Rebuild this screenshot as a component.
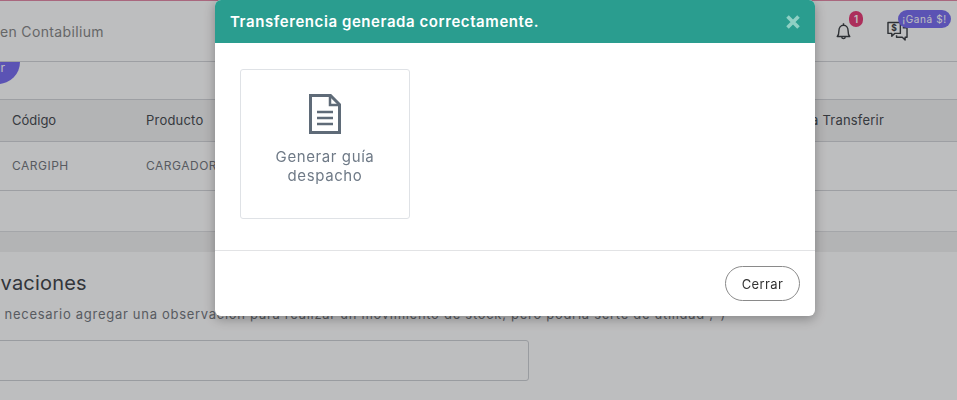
<script>
  const columns = ['Código', 'Producto', 'Cantidad a Transferir'];
</script>

<div class="page">
  <header class="topbar">
    <span class="welcome">Bienvenido en Contabilium</span>
    <div class="top-icons">
      <div class="icon-wrap bell">
        <svg width="15" height="19" viewBox="0 0 18 22" fill="none" stroke="#3f4246" stroke-width="1.7">
          <path d="M1.5 17c1.5-1.500 2-3.500 2-7 0-3.500 2-6.500 5.500-6.500s5.500 3 5.500 6.500c0 3.500.5 5.500 2 7z" stroke-linejoin="round"/>
          <path d="M9 1v2.500M7 17.500a2 2 0 0 0 4 0"/>
        </svg>
        <span class="count">1</span>
      </div>
      <div class="icon-wrap chat">
        <svg width="21" height="20" viewBox="0 0 22 21" fill="none" stroke="#3f4246" stroke-width="1.500">
          <path d="M1 1.500h13v11.500H8l-3 3v-3H1z" stroke-linejoin="round"/>
          <path d="M16.500 7H21v10h-2v3l-3-3h-6v-2" stroke-linejoin="round"/>
          <text x="7.500" y="10.500" text-anchor="middle" class="dollar">$</text>
        </svg>
        <span class="promo">¡Ganá $!</span>
      </div>
    </div>
  </header>

  <div class="toolbar">
    <span class="pill">Transferir</span>
  </div>

  <div class="table">
    <div class="row head">
      <span class="code">{columns[0]}</span>
      <span class="product">{columns[1]}</span>
      <span class="qty">{columns[2]}</span>
    </div>
    <div class="row body">
      <span class="code">CARGIPH</span>
      <span class="product">CARGADOR IPHONE</span>
    </div>
  </div>

  <div class="band"></div>

  <section class="notes">
    <h2>Observaciones</h2>
    <p>No es necesario agregar una observación para realizar un movimiento de stock, pero podría serte de utilidad ;-)</p>
    <div class="input"></div>
  </section>
</div>

<div class="backdrop"></div>

<div class="modal">
  <div class="modal-head">
    <h3>Transferencia generada correctamente.</h3>
    <svg class="close" width="14" height="14" viewBox="0 0 14 14" stroke="#8fd0c4" stroke-width="3.600">
      <path d="M1.500 1.500l11 11M12.500 1.500l-11 11"/>
    </svg>
  </div>
  <div class="modal-body">
    <div class="action">
      <svg width="32" height="40" viewBox="0 0 32 40" fill="none" stroke="#5f6b78" stroke-width="3">
        <path d="M1.500 1.500h20l9 9v28h-29z"/>
        <path d="M21 2v9h9" stroke-width="2.500"/>
        <path d="M8 18h16M8 24h16M8 30h16" stroke-width="2.500"/>
      </svg>
      <span>Generar guía despacho</span>
    </div>
  </div>
  <div class="modal-foot">
    <button>Cerrar</button>
  </div>
</div>

<style>
  :global(body) {
    background: #fff;
    overflow: hidden;
    font-family: "Inter", "Open Sans", sans-serif;
  }

  .page {
    height: 400px;
    overflow: hidden;
    color: #3a3d42;
  }

  .topbar {
    height: 62px;
    box-sizing: border-box;
    border-top: 1px solid #e58aa8;
    border-bottom: 1px solid #d4d6da;
    display: flex;
    align-items: center;
    justify-content: space-between;
    margin-left: -81px;
    padding-right: 18px;
  }

  .welcome {
    font-size: 14px;
    color: #8a8a8a;
    letter-spacing: 0.35px;
  }

  .top-icons {
    display: flex;
    gap: 36px;
    align-items: center;
  }

  .icon-wrap {
    position: relative;
    display: flex;
    height: 20px;
  }

  .bell {
    width: 15px;
    align-items: flex-end;
  }

  .count {
    position: absolute;
    left: 13px;
    top: -10px;
    width: 14px;
    height: 16px;
    border-radius: 7px;
    background: #e83e79;
    color: #fff;
    font-size: 10px;
    font-weight: 600;
    text-align: center;
    line-height: 16px;
  }

  .chat {
    width: 52px;
  }

  .dollar {
    font-size: 9px;
    font-weight: 700;
    fill: #3f4246;
    stroke: none;
  }

  .promo {
    position: absolute;
    left: 11px;
    top: -11px;
    width: 53px;
    height: 18px;
    border-radius: 9px;
    background: #7b6ff0;
    color: #fff;
    font-size: 10px;
    letter-spacing: 0.6px;
    line-height: 18px;
    text-align: center;
    white-space: nowrap;
  }

  .toolbar {
    height: 37px;
    box-sizing: border-box;
    margin-left: -80px;
  }

  .pill {
    display: block;
    width: 100px;
    height: 22px;
    box-sizing: border-box;
    padding-right: 15px;
    text-align: right;
    border-radius: 0 0 22px 22px;
    background: #7b6ff0;
    color: #fff;
    font-size: 12px;
    line-height: 12px;
  }

  .row {
    display: flex;
    align-items: center;
    box-sizing: border-box;
    padding-left: 12px;
    font-size: 13px;
    border-bottom: 1px solid #d4d6da;
  }

  .head {
    height: 43px;
    padding-bottom: 2px;
    background: #f2f2f2;
    border-top: 1px solid #d4d6da;
    color: #4a4d52;
  }

  .body {
    height: 49px;
    padding-bottom: 2px;
    font-size: 12px;
    color: #777a7f;
    letter-spacing: 0.5px;
  }

  .code {
    width: 134px;
  }

  .product {
    width: 400px;
    white-space: nowrap;
  }

  .head .product {
    letter-spacing: 0.2px;
  }

  .qty {
    margin-left: auto;
    padding-right: 73px;
    letter-spacing: 0.2px;
  }

  .band {
    height: 20px;
    margin-top: 40px;
    background: #f2f2f2;
    border-top: 1px solid #dedfe2;
  }

  .notes {
    margin-left: -58px;
    padding-top: 19px;
  }

  h2 {
    margin: 0;
    font-size: 20px;
    font-weight: 400;
    line-height: 24px;
    letter-spacing: 0.2px;
    color: #45484d;
  }

  .notes p {
    margin: 10px 0 0 19px;
    font-size: 13px;
    line-height: 18px;
    letter-spacing: 0.71px;
    color: #777a7f;
    white-space: nowrap;
  }

  .input {
    width: 587px;
    height: 41px;
    margin-top: 17px;
    box-sizing: border-box;
    border: 1px solid #cfd1d5;
    border-radius: 3px;
  }

  .backdrop {
    position: fixed;
    inset: 0;
    background: rgba(0, 2, 8, 0.26);
  }

  .modal {
    position: fixed;
    left: 215px;
    top: 0;
    width: 600px;
    height: 316px;
    display: flex;
    flex-direction: column;
    background: #fff;
    border-radius: 6px;
    box-shadow: 0 3px 12px rgba(0, 0, 0, 0.3);
    overflow: hidden;
  }

  .modal-head {
    height: 43px;
    flex: none;
    display: flex;
    align-items: center;
    justify-content: space-between;
    padding: 0 15px;
    background: #2a9d8f;
  }

  h3 {
    margin: 0;
    font-size: 15px;
    font-weight: 600;
    letter-spacing: 0.57px;
    color: #fff;
  }

  .modal-body {
    height: 207px;
    flex: none;
    box-sizing: border-box;
    padding: 26px 25px 0;
  }

  .action {
    width: 170px;
    height: 150px;
    box-sizing: border-box;
    padding-top: 24px;
    border: 1px solid #dfe2e6;
    border-radius: 3px;
    display: flex;
    flex-direction: column;
    align-items: center;
    text-align: center;
    color: #6f7a87;
    font-size: 15px;
    line-height: 19px;
    letter-spacing: 0.6px;
  }

  .action span {
    width: 130px;
    margin-top: 13px;
  }

  .modal-foot {
    flex: 1;
    display: flex;
    align-items: center;
    justify-content: flex-end;
    padding-right: 15px;
    border-top: 1px solid #e2e3e5;
  }

  button {
    width: 75px;
    height: 35px;
    border: 1px solid #8a8a8a;
    border-radius: 18px;
    background: #fff;
    color: #333;
    font-family: inherit;
    font-size: 13px;
    letter-spacing: 0.4px;
  }
</style>
